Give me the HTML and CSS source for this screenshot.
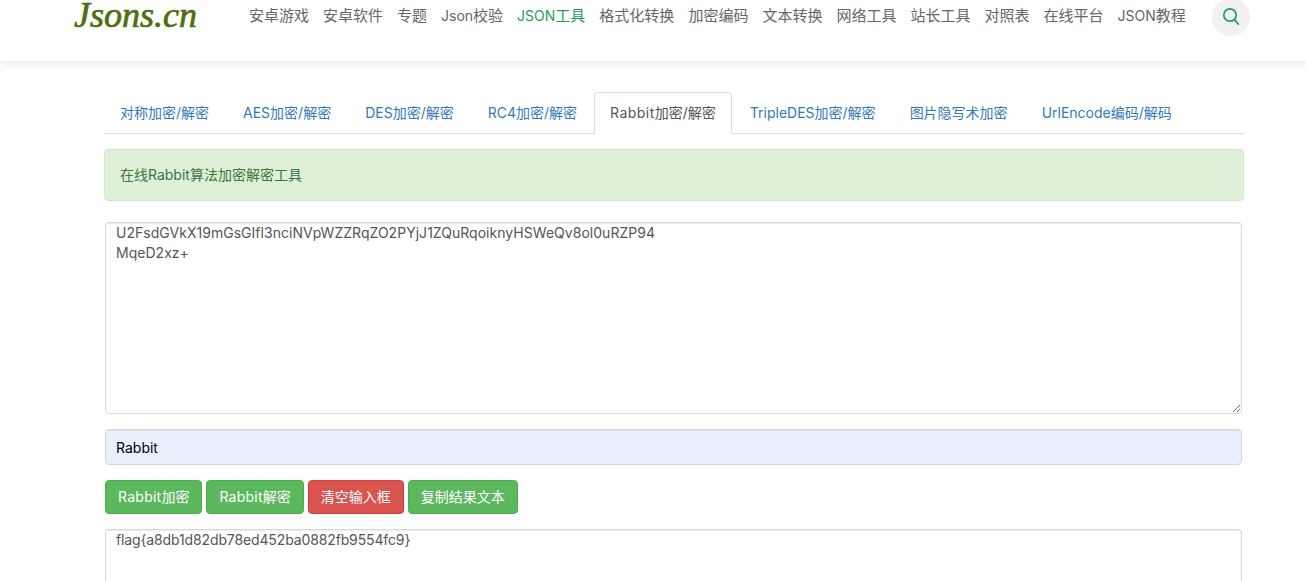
FILE: index.html
```html
<!DOCTYPE html>
<html lang="zh-CN">
<head>
<meta charset="utf-8">
<title>Rabbit加密/解密</title>
<link rel="stylesheet" href="styles.css">
</head>
<body>
<header class="site-header">
  <a class="logo" href="#">Jsons.cn</a>
  <nav class="main-nav">
    <a href="#">安卓游戏</a>
    <a href="#">安卓软件</a>
    <a href="#">专题</a>
    <a href="#"><span class="latin">Json</span>校验</a>
    <a href="#" class="current"><span class="latin">JSON</span>工具</a>
    <a href="#">格式化转换</a>
    <a href="#">加密编码</a>
    <a href="#">文本转换</a>
    <a href="#">网络工具</a>
    <a href="#">站长工具</a>
    <a href="#">对照表</a>
    <a href="#">在线平台</a>
    <a href="#"><span class="latin">JSON</span>教程</a>
  </nav>
  <button class="search-btn" aria-label="搜索">
    <svg width="18" height="20" viewBox="0 0 18 20" fill="none" stroke="#1f9d5a" stroke-width="1.7" stroke-linecap="round"><circle cx="8" cy="8" r="6.2"/><path d="M12.4 12.6l4 4.6"/></svg>
  </button>
</header>
<main class="content">
  <ul class="tabs">
    <li><a href="#">对称加密/解密</a></li>
    <li><a href="#">AES加密/解密</a></li>
    <li><a href="#">DES加密/解密</a></li>
    <li><a href="#">RC4加密/解密</a></li>
    <li class="active"><a href="#"><span class="rabbit-tab">Rabbit</span>加密/解密</a></li>
    <li><a href="#">TripleDES加密/解密</a></li>
    <li><a href="#">图片隐写术加密</a></li>
    <li><a href="#">UrlEncode编码/解码</a></li>
  </ul>
  <div class="alert">在线Rabbit算法加密解密工具</div>
  <div class="form">
    <textarea class="field area-main" spellcheck="false">U2FsdGVkX19mGsGIfl3nciNVpWZZRqZO2PYjJ1ZQuRqoiknyHSWeQv8ol0uRZP94
MqeD2xz+</textarea>
    <input class="field key" type="text" value="Rabbit">
    <div class="actions">
      <button class="btn green"><span class="rabbit-btn">Rabbit</span>加密</button>
      <button class="btn green"><span class="rabbit-btn">Rabbit</span>解密</button>
      <button class="btn red">清空输入框</button>
      <button class="btn green">复制结果文本</button>
    </div>
    <textarea class="field area-result" spellcheck="false">flag{a8db1d82db78ed452ba0882fb9554fc9}</textarea>
  </div>
</main>
</body>
</html>
```
FILE: styles.css
```css
* { box-sizing: border-box; }
html, body { height: 100%; }
body {
  margin: 0;
  overflow: hidden;
  background: #fff;
  font-family: "Inter", "Noto Sans CJK SC", sans-serif;
  font-size: 14px;
  line-height: 20px;
  color: #555;
}
a { text-decoration: none; }

.site-header {
  height: 61px;
  display: flex;
  align-items: flex-start;
  padding-left: 74px;
  box-shadow: 0 2px 8px rgba(0, 0, 0, .1);
  overflow: hidden;
}
.logo {
  width: 168px;
  font-family: "Liberation Serif", serif;
  font-style: italic;
  font-size: 36px;
  line-height: 30px;
  color: #4f6f0f;
  -webkit-text-stroke: .7px #4f6f0f;
}
.main-nav {
  display: flex;
  gap: 14px;
  margin-left: 7px;
  padding-top: 5px;
  font-size: 15px;
  line-height: 22px;
}
.main-nav a { color: #666; }
.main-nav a.current { color: #1f9d5a; }
.latin { font-size: 14px; }
.search-btn {
  width: 38px;
  height: 38px;
  margin: -2px 0 0 26px;
  padding: 0;
  display: flex;
  align-items: center;
  justify-content: center;
  border: 0;
  border-radius: 50%;
  background: #f1f1f1;
}

.content { width: 1140px; margin: 31px 0 0 104px; }
.tabs {
  display: flex;
  gap: 2px;
  margin: 0;
  padding: 0;
  list-style: none;
  border-bottom: 1px solid #ddd;
}
.tabs li { margin-bottom: -1px; }
.tabs .active { margin-left: -1px; }
.tabs a {
  display: block;
  padding: 10px 15px;
  border: 1px solid transparent;
  border-radius: 4px 4px 0 0;
  color: #337ab7;
}
.tabs .active a {
  color: #555;
  background: #fff;
  border-color: #ddd #ddd #fff;
}
.rabbit-tab { letter-spacing: .47px; }
.rabbit-btn { letter-spacing: .25px; }
.alert {
  height: 52px;
  margin-top: 15px;
  padding: 15px;
  border: 1px solid #d6e9c6;
  border-radius: 4px;
  background: #dff0d8;
  color: #3c763d;
}
.form { padding: 21px 2px 0 1px; display: flex; flex-direction: column; }
.field {
  display: block;
  width: 100%;
  padding: 0 10px;
  border: 1px solid #d8d8d8;
  border-radius: 4px;
  box-shadow: inset 0 1px 1px rgba(0, 0, 0, .075);
  font: inherit;
  color: #555;
  background: #fff;
  outline: 0;
}
.area-main { height: 192px; letter-spacing: .03px; }
.key {
  height: 36px;
  margin-top: 15px;
  background: #e8f0fe;
  color: #000;
}
.actions { display: flex; gap: 4px; margin-top: 15px; }
.btn {
  height: 34px;
  padding: 6px 12px;
  border: 1px solid;
  border-radius: 4px;
  font: inherit;
  color: #fff;
}
.green { background: #5cb85c; border-color: #4cae4c; }
.red { background: #d9534f; border-color: #d43f3a; }
.area-result { height: 192px; margin-top: 15px; letter-spacing: -.13px; }
```
